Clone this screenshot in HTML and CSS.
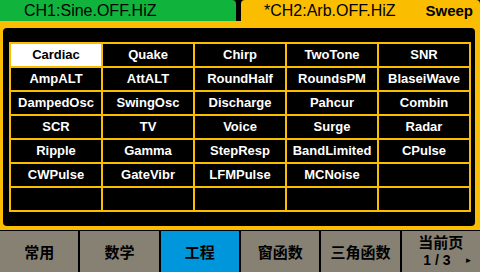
FILE: index.html
```html
<!DOCTYPE html>
<html lang="zh-CN">

<head>
    <meta charset="UTF-8">
    <title>Arb Waveforms</title>
    <link rel="stylesheet" href="styles.css">
</head>

<body>
    <div class="screen">
        <div class="header">
            <div class="tab ch1">CH1:Sine.OFF.HiZ</div>
            <div class="tab ch2">
                <span>*CH2:Arb.OFF.HiZ</span>
                <span class="mode">Sweep</span>
            </div>
        </div>

        <div class="frame">
            <div class="panel">
                <div class="wave-grid">
                    <div class="cell selected">Cardiac</div>
                    <div class="cell">Quake</div>
                    <div class="cell">Chirp</div>
                    <div class="cell">TwoTone</div>
                    <div class="cell">SNR</div>

                    <div class="cell">AmpALT</div>
                    <div class="cell">AttALT</div>
                    <div class="cell">RoundHalf</div>
                    <div class="cell">RoundsPM</div>
                    <div class="cell">BlaseiWave</div>

                    <div class="cell">DampedOsc</div>
                    <div class="cell">SwingOsc</div>
                    <div class="cell">Discharge</div>
                    <div class="cell">Pahcur</div>
                    <div class="cell">Combin</div>

                    <div class="cell">SCR</div>
                    <div class="cell">TV</div>
                    <div class="cell">Voice</div>
                    <div class="cell">Surge</div>
                    <div class="cell">Radar</div>

                    <div class="cell">Ripple</div>
                    <div class="cell">Gamma</div>
                    <div class="cell">StepResp</div>
                    <div class="cell">BandLimited</div>
                    <div class="cell">CPulse</div>

                    <div class="cell">CWPulse</div>
                    <div class="cell">GateVibr</div>
                    <div class="cell">LFMPulse</div>
                    <div class="cell">MCNoise</div>
                    <div class="cell"></div>

                    <div class="cell"></div>
                    <div class="cell"></div>
                    <div class="cell"></div>
                    <div class="cell"></div>
                    <div class="cell"></div>
                </div>
            </div>
        </div>

        <div class="menu">
            <div class="menu-item">常用</div>
            <div class="menu-item">数学</div>
            <div class="menu-item active">工程</div>
            <div class="menu-item">窗函数</div>
            <div class="menu-item">三角函数</div>
            <div class="menu-item page">
                <span>当前页</span>
                <span class="page-num">1 / 3 <span class="arrow">&#9658;</span></span>
            </div>
        </div>
    </div>
</body>

</html>
```

FILE: styles.css
```css
body {
    margin: 0;
    background-color: #000;
    font-family: 'Liberation Sans', Arial, sans-serif;
}

.screen {
    width: 480px;
    height: 272px;
    display: flex;
    flex-direction: column;
    overflow: hidden;
}

/* channel tabs */
.header {
    display: flex;
    height: 21px;
    gap: 5px;
}

.tab {
    height: 21px;
    font-size: 16px;
    line-height: 21px;
    color: #000;
}

.ch1 {
    width: 212px;
    padding-left: 24px;
    background-color: #10b43c;
    border-radius: 0 4px 0 0;
}

.ch2 {
    flex: 1;
    display: flex;
    justify-content: space-between;
    padding: 0 7px 0 23px;
    background-color: #fbbd00;
    border-radius: 4px 4px 0 0;
}

.mode {
    font-weight: bold;
    font-size: 15px;
}

/* waveform table */
.frame {
    background-color: #fbbd00;
    padding: 7px 5px 4px 3px;
    margin-bottom: 1px;
}

.panel {
    height: 170px;
    padding: 14px 4px 14px 6px;
    background-color: #000;
    border-radius: 4px;
}

.wave-grid {
    display: grid;
    grid-template-columns: repeat(5, 90px);
    grid-auto-rows: 22px;
    gap: 2px;
    padding: 2px;
    width: 458px;
    background-color: #fbbd00;
}

.cell {
    background-color: #000;
    color: #fff;
    font-weight: bold;
    font-size: 13px;
    line-height: 22px;
    text-align: center;
}

.cell.selected {
    background-color: #fff;
    color: #000;
}

/* soft menu */
.menu {
    display: flex;
    gap: 2px;
    height: 41px;
}

.menu-item {
    flex: 1;
    display: flex;
    align-items: center;
    justify-content: center;
    background-color: #878174;
    color: #000;
    font-family: 'Noto Sans CJK SC', sans-serif;
    font-weight: bold;
    font-size: 15px;
}

.menu-item.active {
    background-color: #0096dc;
}

.page {
    flex-direction: column;
    line-height: 18px;
}

.page-num {
    font-family: 'Liberation Sans', Arial, sans-serif;
    font-size: 14px;
    padding-left: 14px;
}

.arrow {
    font-size: 8px;
    margin-left: 10px;
    vertical-align: middle;
}
```
